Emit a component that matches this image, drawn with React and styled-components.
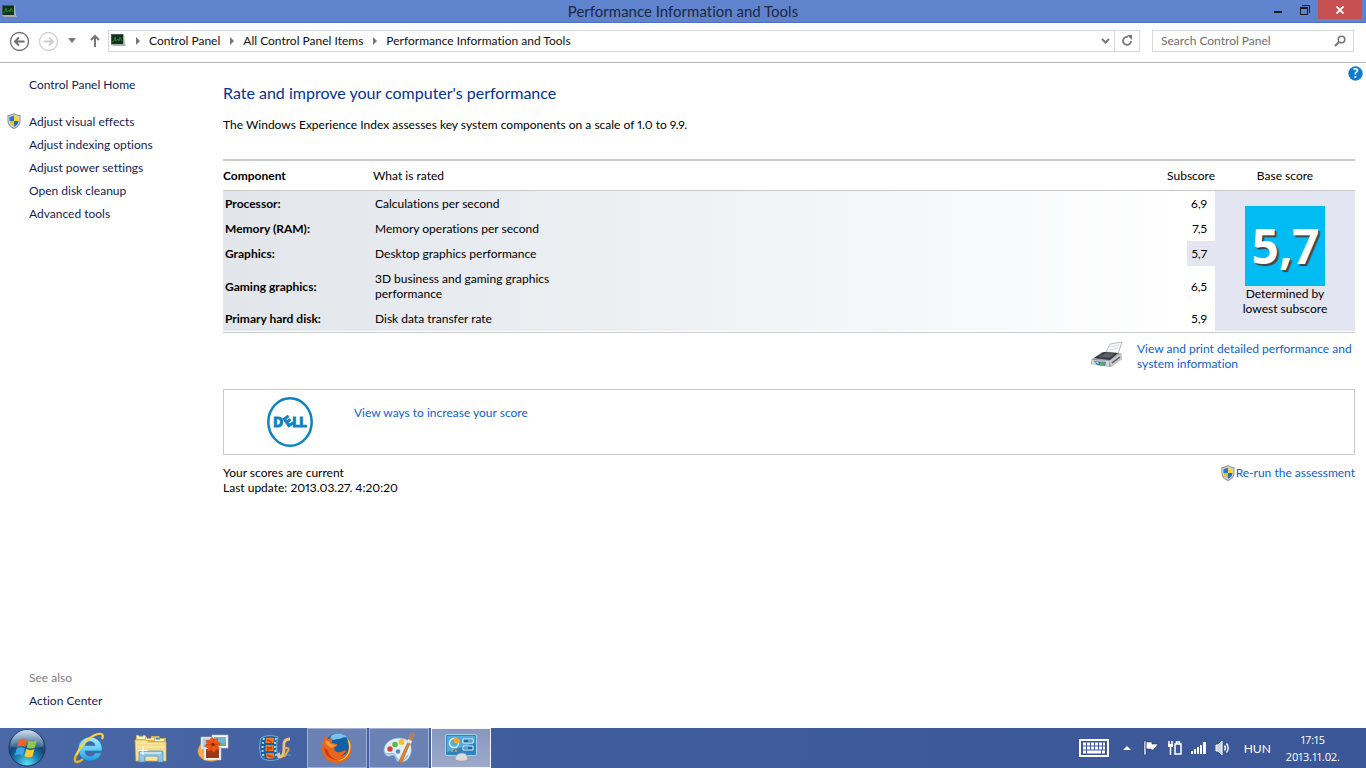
import React from 'react';
import styled, { createGlobalStyle, css } from 'styled-components';

const GlobalStyle = createGlobalStyle`
    * {
        box-sizing: border-box;
    }

    body {
        margin: 0;
        background: white;
        color: #000;
        font-family: Lato, "Open Sans", sans-serif;
        font-size: 12px;
        line-height: 15px;
        font-variant-ligatures: none;
        font-variant-numeric: proportional-nums;
    }

    button {
        padding: 0;
        border: 0;
        background: none;
        color: inherit;
        font: inherit;
        font-variant-ligatures: none;
    }

    svg {
        display: block;
        flex: none;
    }
`;

const Screen = styled.div`
    display: flex;
    flex-direction: column;
    min-height: 100vh;
`;

const TitleBar = styled.header`
    display: grid;
    grid-template-columns: 1fr auto 1fr;
    height: 23px;
    background: #6083cd;
    border-bottom: 1px solid #4d6fb8;
`;

const TitleIcon = styled.div`
    padding: 5px 2px;
`;

const WindowTitle = styled.div`
    color: #1c2740;
    font-size: 15px;
    line-height: 23px;
`;

const WindowButtons = styled.div`
    display: flex;
    justify-content: flex-end;
    padding-right: 4px;
`;

const WindowButton = styled.button`
    display: flex;
    align-items: center;
    justify-content: center;
    width: ${props => (props.$close ? '44px' : '27px')};
    height: 19px;
    background: ${props => (props.$close ? '#c75050' : 'transparent')};
`;

const NavBar = styled.nav`
    display: flex;
    align-items: center;
    height: 40px;
    padding: 0 12px 4px 9px;
    border-bottom: 1px solid #b4b4b4;
`;

const NavButtons = styled.div`
    display: flex;
    align-items: center;
    gap: 9px;
    width: 99px;
`;

const NavButton = styled.button`
    display: flex;
`;

const AddressBar = styled.div`
    display: flex;
    flex: 1;
    align-items: stretch;
    height: 22px;
    border: 1px solid #d9d9d9;
    color: #111;
`;

const Crumbs = styled.div`
    display: flex;
    flex: 1;
    align-items: center;
    padding-left: 2px;
`;

const Crumb = styled.button`
    white-space: nowrap;
`;

const CrumbArrow = styled.span`
    display: flex;
    justify-content: center;
    width: 23px;
`;

const AddressButton = styled.button`
    display: flex;
    align-items: center;
    justify-content: center;
    width: ${props => (props.$refresh ? '25px' : '18px')};
    border-left: ${props => (props.$refresh ? '1px solid #d9d9d9' : '0')};
`;

const SearchBox = styled.form`
    display: flex;
    align-items: center;
    width: 202px;
    height: 22px;
    margin-left: 12px;
    padding: 0 7px 0 8px;
    border: 1px solid #d9d9d9;
`;

const SearchInput = styled.input`
    flex: 1;
    min-width: 0;
    padding: 0;
    border: 0;
    outline: 0;
    font: inherit;

    &::placeholder {
        color: #6d6d6d;
        opacity: 1;
    }
`;

const Content = styled.div`
    display: flex;
    flex: 1;
`;

const Sidebar = styled.aside`
    display: flex;
    flex-direction: column;
    justify-content: space-between;
    width: 223px;
    padding: 10px 0 16px 7px;
`;

const SideList = styled.ul`
    margin: 0;
    padding: 0;
    list-style: none;
`;

const SideItem = styled.li`
    display: flex;
    align-items: center;
    height: ${props => (props.$shield ? '24px' : '23px')};
    padding-left: ${props => (props.$shield ? '0' : '22px')};
    margin-bottom: ${props => (props.$spaced ? '13px' : '0')};
    gap: 8px;
    color: ${props => (props.$muted ? '#7f7f7f' : '#151c55')};
`;

const SideLink = styled.a`
    color: #151c55;
    text-decoration: none;
`;

const Main = styled.main`
    position: relative;
    flex: 1;
    padding: 20px 11px 0 0;
`;

const HelpButton = styled.button`
    position: absolute;
    top: 3px;
    right: 3px;
`;

const Heading = styled.h1`
    margin: 0 0 14px;
    color: #003399;
    font-size: 16px;
    font-weight: 400;
    line-height: 20px;
`;

const Intro = styled.p`
    margin: 0 0 27px;
`;

const ScoreTable = styled.table`
    width: 100%;
    padding-bottom: 1px;
    border-collapse: separate;
    border-spacing: 0;
    border-top: 2px solid #cacaca;
    border-bottom: 1px solid #cacaca;
    table-layout: fixed;
`;

const HeadCell = styled.th`
    height: 30px;
    padding: 0;
    border-bottom: 1px solid #cacaca;
    font-weight: ${props => (props.$strong ? '700' : '400')};
    text-align: ${props => props.$align || 'left'};
`;

const ScoreRow = styled.tr`
    background: linear-gradient(to right, #e2e6eb 0%, #e9ecf0 25%, #ffffff 86%);
`;

const NameCell = styled.th`
    padding: 5px 2px;
    text-align: left;
`;

const RatedCell = styled.td`
    padding: 5px 2px;
`;

const RatedText = styled.div`
    max-width: ${props => (props.$wrap ? '200px' : 'none')};
`;

const SubscoreCell = styled.td`
    padding: 5px 8px 5px 0;
    text-align: right;
    ${props => props.$lowest && css`
        background: #e3e5f1;
    `}
`;

const BaseCell = styled.td`
    padding: 0;
    background: #e3e5f1;
    text-align: center;
`;

const BaseScore = styled.div`
    width: 80px;
    height: 80px;
    margin: 0 auto;
    background: #00bcf2;
    color: white;
    font-family: "Open Sans", sans-serif;
    font-size: 48px;
    font-weight: 700;
    line-height: 80px;
    text-shadow: 2px 2px 1px #444;
`;

const BaseNote = styled.div`
    width: 100px;
    margin: 0 auto;
`;

const Link = styled.a`
    color: #0b61cd;
    text-decoration: none;
`;

const PrintRow = styled.div`
    display: flex;
    justify-content: flex-end;
    gap: 14px;
    padding: 8px 0 18px;
`;

const PrintLink = styled(Link)`
    width: 218px;
`;

const VendorBox = styled.section`
    display: flex;
    height: 66px;
    padding: 7px 0 0 43px;
    border: 1px solid #cacaca;
`;

const VendorLink = styled(Link)`
    margin: 8px 0 0 41px;
`;

const StatusRow = styled.footer`
    display: flex;
    justify-content: space-between;
    align-items: flex-start;
    padding-top: 10px;
`;

const RunLink = styled(Link)`
    display: flex;
    align-items: flex-start;
    gap: 1px;
`;

const Taskbar = styled.div`
    display: flex;
    height: 40px;
    background: linear-gradient(to right, #4a67a6 0%, #3f5c9d 40%, #3b5797 100%);
    color: white;
`;

const StartButton = styled.button`
    display: flex;
    align-items: center;
    justify-content: center;
    width: 57px;
    padding-right: 3px;
`;

const TaskButtons = styled.div`
    display: flex;
    flex: 1;
    gap: 2px;
    padding-left: 2px;
`;

const TaskButton = styled.button`
    display: flex;
    align-items: center;
    justify-content: center;
    width: 60px;
    height: 40px;
    border: 1px solid transparent;
    ${props => props.$open && css`
        background: #6b81b4;
        border-color: #a3b1d2;
    `}
    ${props => props.$active && css`
        background: linear-gradient(#8797bd, #9daaca);
        border-color: #f4f6fa;
    `}
`;

const Tray = styled.div`
    display: flex;
    align-items: center;
    gap: 8px;
    padding-right: 26px;
`;

const TrayButton = styled.button`
    display: flex;
    align-items: center;
    justify-content: center;
    min-width: 16px;
    margin-right: ${props => (props.$spaced ? '2px' : '0')};
`;

const Language = styled.button`
    margin: 0 7px 0 5px;
`;

const Clock = styled.time`
    font-family: "Open Sans", sans-serif;
    font-size: 11px;
    line-height: 17px;
    text-align: center;
`;

const MonitorIcon = () => (
    <svg width="15" height="13" viewBox="0 0 15 13">
        <path d="M0 0h13l1 10 1 2H3l-3-1z" fill="#a9adad" />
        <path d="M0 0h12v10H0z" fill="#4c5450" />
        <path d="M1 1h11v9H1z" fill="#14301f" />
        <path d="M1 8l2-1 1-4 1 4 2-2 1 2 1-4 2 4" fill="none" stroke="#237f30" />
    </svg>
);

const CircleArrow = ({ forward }) => {
    const color = forward ? '#cfcfcf' : '#6e6e6e';
    return (
        <svg width="20" height="20" viewBox="0 0 20 20" fill="none" stroke={color}>
            <circle cx="10.500" cy="10.500" r="9" strokeWidth="1.300" />
            {forward
                ? <path d="M5.500 10.500h9M11 6.500l4 4-4 4" strokeWidth="2" />
                : <path d="M15.500 10.500h-9M10 6.500l-4 4 4 4" strokeWidth="2" />}
        </svg>
    );
};

const ShieldIcon = () => (
    <svg width="14" height="16" viewBox="0 0 14 16">
        <path d="M7 0C5 1.600 3 2 .5 2v6c0 4 3 6.500 6.500 8 3.500-1.500 6.500-4 6.500-8V2C11 2 9 1.600 7 0z" fill="#8b9197" />
        <path d="M7 1.200C5 2.500 3.500 2.900 1.500 3v5c0 3.500 2.500 5.500 5.500 6.900 3-1.400 5.500-3.400 5.500-6.900V3C10.500 2.900 9 2.500 7 1.200z" fill="#d9dde0" />
        <path d="M7 2.500C5.500 3.400 4 3.800 2.500 4v4H7z" fill="#2778d2" />
        <path d="M7 2.500C8.500 3.400 10 3.800 11.500 4v4H7z" fill="#fbd72c" />
        <path d="M2.500 8c0 3 2 4.700 4.500 5.800V8z" fill="#f2c01f" />
        <path d="M11.500 8c0 3-2 4.700-4.500 5.800V8z" fill="#1f6dc8" />
    </svg>
);

const HelpIcon = () => (
    <svg width="15" height="15" viewBox="0 0 15 15">
        <circle cx="7.500" cy="7.500" r="7.200" fill="#1279d2" />
        <text x="7.500" y="12" fill="white" fontSize="13" fontWeight="700" textAnchor="middle">?</text>
    </svg>
);

const PrinterIcon = () => (
    <svg width="33" height="27" viewBox="0 0 33 27">
        <path d="M16 11L20 3l12-2-4 12z" fill="#f5f6f7" stroke="#a8abae" strokeWidth=".8" />
        <path d="M20 6l9-2M19 9l9-2" stroke="#e0e2e4" />
        <path d="M1 19L12 11l19 1 1 6-11 8-20-3z" fill="#9a9ea3" />
        <path d="M4 17l10-6 14 1-8 7z" fill="#34373b" />
        <path d="M8 16l8-4 9 1-6 4z" fill="#5b6066" />
        <path d="M1 19l18 1v5L2 23z" fill="#d6d9dc" />
        <path d="M19 20l12-8 1 6-11 8z" fill="#c4c8cc" />
        <path d="M22 22l8-6" stroke="#55595e" strokeWidth="1.500" />
        <path d="M4 20l12 1-1 4-8-1z" fill="#357fc4" />
        <path d="M10 21l5 1-1 3-4-1z" fill="#5bb05a" />
        <path d="M5 21l3 0 1 2z" fill="#c7e6fa" />
    </svg>
);

const DellLogo = () => (
    <svg width="46" height="50" viewBox="0 0 46 50">
        <ellipse cx="23" cy="25" rx="21.700" ry="23.700" fill="white" stroke="#0f82c1" strokeWidth="2.500" />
        <g fill="#0f82c1" stroke="#0f82c1" strokeWidth="1" fontFamily="Open Sans" fontSize="14" fontWeight="700">
            <text x="6" y="30">D</text>
            <text x="17" y="30" transform="rotate(-35 20 25)">E</text>
            <text x="25" y="30">L</text>
            <text x="32" y="30">L</text>
        </g>
    </svg>
);

const StartIcon = () => (
    <svg width="38" height="38" viewBox="0 0 38 38">
        <defs>
            <radialGradient id="orb" cx="50%" cy="95%" r="90%">
                <stop offset="0" stopColor="#63e2f7" />
                <stop offset=".35" stopColor="#1b84b4" />
                <stop offset=".65" stopColor="#154673" />
                <stop offset="1" stopColor="#6e93b8" />
            </radialGradient>
            <linearGradient id="orbGloss" x2="0" y2="1">
                <stop offset="0" stopColor="#dbe7f2" stopOpacity=".9" />
                <stop offset="1" stopColor="#7ea3c4" stopOpacity=".3" />
            </linearGradient>
        </defs>
        <circle cx="19" cy="19" r="18" fill="url(#orb)" stroke="#1b335e" />
        <path d="M2.500 17a16.500 16 0 0 1 33 0c-8 4-11-1-17 0s-10 3-16 0z" fill="url(#orbGloss)" />
        <path d="M11 10.500c3-1.400 5.500-1 8 .5l-1.800 7c-2.500-1.400-5-1.600-8-.3z" fill="#f0642c" />
        <path d="M20.500 11.500c2.500 1.300 5 1.300 8.300 0l-2 7.200c-3 1.200-5.600 1-8-.3z" fill="#93c842" />
        <path d="M8.800 19.200c3-1.300 5.500-1 8 .4l-2 7.200c-2.500-1.500-5-1.700-8-.4z" fill="#3fa5e6" />
        <path d="M18.300 20c2.500 1.400 5 1.500 8.100.3l-2 7.200c-3 1.300-5.600 1-8-.3z" fill="#fdc92f" />
    </svg>
);

const ExplorerIcon = () => (
    <svg width="32" height="32" viewBox="0 0 32 32">
        <defs>
            <linearGradient id="ieBlue" x2="0" y2="1">
                <stop offset="0" stopColor="#a9ebfe" />
                <stop offset=".55" stopColor="#5cc8f4" />
                <stop offset="1" stopColor="#2496dc" />
            </linearGradient>
        </defs>
        <path d="M28.500 21a12 12 0 1 1 .5-6v4H12c.5 6 8 7 10 2zM12 13.500h10c-.7-5.500-9-5.500-10 0z" fill="url(#ieBlue)" stroke="#1c78bd" strokeWidth=".6" />
        <path d="M4.500 21C1 26 1 30 4 30c2 0 4-1 6-3" fill="none" stroke="#e9b61c" strokeWidth="2.400" />
        <path d="M3.500 23C8 12 17 4 25 2c4-1 6 1 4 5" fill="none" stroke="#fbd43a" strokeWidth="2.200" />
    </svg>
);

const FolderIcon = () => (
    <svg width="34" height="30" viewBox="0 0 34 30">
        <path d="M2 4V2h9l2 2h4V3h8l1 2h6v23H2z" fill="#d9b455" />
        <path d="M3 3h8v3H3z" fill="#fff3bd" />
        <path d="M5 2h4v1.500H5z" fill="#28a43a" />
        <path d="M12 5h8v2h-8z" fill="#fff3bd" />
        <path d="M13 4h4v1.500h-4z" fill="#d73b2b" />
        <path d="M21 6h9v2h-9z" fill="#fff3bd" />
        <path d="M22 5h4v1.500h-4z" fill="#2b8ddb" />
        <path d="M1 7h11l2 2h18v19H2z" fill="#f8e49b" stroke="#d4b055" strokeWidth=".8" />
        <path d="M3 12h28M3 16h28" stroke="#f2d67f" />
        <path d="M5 29V19q0-1 1-1h22q1 0 1 1v10h-5v-5q0-1-1-1H12q-1 0-1 1v5z" fill="#8fc5e6" stroke="#4f93bf" strokeWidth=".8" />
        <path d="M6 20h21" stroke="#d3edf9" strokeWidth="1.500" />
        <path d="M9 13v9M4.500 17.500h9" stroke="white" />
    </svg>
);

const PhotosIcon = () => (
    <svg width="32" height="30" viewBox="0 0 32 30">
        <path d="M4 11c-6 7-3 15 7 17 4 1 7 0 9-1-8 0-14-6-13-14z" fill="#f6ad52" stroke="#d5822c" strokeWidth=".6" />
        <path d="M4 4h12v12H4z" fill="#f3f6fa" stroke="#b7c0cc" strokeWidth=".6" />
        <path d="M5.500 5.500h9v9h-9z" fill="#a8cdec" />
        <path d="M15 2h16v13H15z" fill="#fbfcfd" stroke="#b7c0cc" strokeWidth=".6" />
        <path d="M17 4h12v9H17z" fill="#6fb7d8" />
        <path d="M17 10h12v3H17z" fill="#6bb265" />
        <path d="M7 15h17v12H7z" fill="#f3f6fa" stroke="#b7c0cc" strokeWidth=".6" />
        <path d="M9 16h13v9H9z" fill="#9a3a19" />
        <path d="M15 4l2.500 2 3.500-1 0 3.500 3 2-2.500 2.500 1 3.500-3.500 0-2 3-3-2.500-3.500 1.500 0-3.500-3.500-2 2.500-2.500-1-3.500 3.500 0z" fill="#ee5716" />
        <path d="M11 8l10 7M17 6l-3 11M9 12l14-1" stroke="#c43c0c" strokeWidth=".6" />
        <circle cx="16" cy="11.500" r="1.600" fill="#7a220b" />
    </svg>
);

const MovieIcon = () => (
    <svg width="34" height="28" viewBox="0 0 34 28">
        <path d="M3 4c5-3 11-3 17-1-2 7-2 15 1 22-6 2-13 2-17-1C1 18 1 10 3 4z" fill="#1f5c9a" stroke="#75b3df" />
        <path d="M6 4c-2 7-2 14 0 20M18 4c-2 7-1 14 1 20" stroke="#a7dcf5" strokeWidth="2" strokeDasharray="2 2" fill="none" />
        <path d="M8 4c3-.8 5-.8 8 0l-.5 5H7.500zM7.500 11h8v6h-8zM8 19h8l.5 5c-3 1-5 1-8 0z" fill="#ee7b20" />
        <path d="M9 6l5 2M9 13l5 2m0-2l-5 3M9 21l6 2" stroke="#c7400b" strokeWidth="1.500" />
        <path d="M21 21h12" stroke="#3d86c2" strokeWidth="2" />
        <path d="M32 5c-5 0-7 3-6 8 0 5-1 10-4 10-2 0-2-3 0-3" fill="none" stroke="#f0c27a" strokeWidth="2.800" />
        <path d="M26 15c3-2 6-1 4 2l-4 6" fill="none" stroke="#e8a953" strokeWidth="2" />
    </svg>
);

const FirefoxIcon = () => (
    <svg width="32" height="32" viewBox="0 0 32 32">
        <circle cx="17" cy="14.500" r="13" fill="#1460a8" />
        <path d="M10 4c5-4 13-3 17 2-5-2-6 1-10 1s-5 2-8 1z" fill="#75c3ee" />
        <path d="M2 8c0-2 1-3 2-4 1 2 2 3 3 3 2-1 3-1 5 0-1 1-2 2-1 4l5 1c1 1 0 2-3 4 0 3 3 5 6 4 3 0 4-2 5-2 2 1-1 5-5 6 6 0 9-5 9-10 0-4-1-7-3-9 5 3 6 9 5 14-1 8-7 12-14 12C7 31 1 25 1 17c0-4 1-6 1-9z" fill="#e7651c" />
        <path d="M26 6c4 4 4 8 3 13-2 7-8 10-13 10 5-1 12-5 12-13 0-4-1-7-2-10z" fill="#fcd13b" />
        <path d="M3 15c1 8 6 13 14 13-5-1-9-4-10-9z" fill="#c63817" />
        <path d="M4 9c2-1 5 0 6 3l5 1c-1 1-3 2-4 3-3-1-6-3-7-7z" fill="#f49a31" />
    </svg>
);

const PaintIcon = () => (
    <svg width="32" height="32" viewBox="0 0 32 32">
        <path d="M16 6C7 6 1 12 1 18c0 5 3 7 6 6 4-2 5 0 6 3 1 4 7 4 11 1 4-4 5-9 4-14-1-5-5-8-12-8z" fill="#e0eff9" stroke="#7bacc9" strokeWidth=".8" />
        <path d="M2 21c3 3 6-1 9 1 2 1 2 6 6 7 3 0 6-2 8-6" fill="none" stroke="#8cc5e6" strokeWidth="1.500" />
        <circle cx="7" cy="17" r="2.700" fill="#dc4138" />
        <circle cx="12" cy="12.500" r="2.700" fill="#5db745" />
        <circle cx="18.500" cy="10" r="3" fill="#f1c32e" />
        <circle cx="15" cy="19.500" r="2.300" fill="#5c8db7" />
        <path d="M26 8l2 1-9 21-3 1 1-4z" fill="#e2842c" stroke="#a65215" strokeWidth=".5" />
        <path d="M25 7l2-6 4-1 1 3-3 6z" fill="#ab8468" />
        <path d="M25 7l4 2-1 3-4-2z" fill="#e6e7e8" />
    </svg>
);

const PanelIcon = () => (
    <svg width="32" height="28" viewBox="0 0 32 28">
        <rect x=".5" y=".5" width="31" height="21" rx="1.500" fill="#2d82bf" stroke="#9fd5f1" />
        <path d="M2 2h28v7L2 18z" fill="#54abdc" />
        <circle cx="9" cy="9" r="4.500" fill="none" stroke="#d9effb" strokeWidth="1.500" />
        <path d="M9 9V3a6 6 0 0 1 6 6z" fill="#f8a92d" />
        <path d="M18 5h10v4H18zM18 12h10v4H18z" fill="#1c6aa7" stroke="#dff2fc" />
        <path d="M23 7h4M19 14h4" stroke="#9fd5f1" />
        <circle cx="7" cy="17" r="1" fill="#f8a92d" />
        <circle cx="11" cy="17" r="1" fill="#f8a92d" />
        <path d="M10 25c0-3 3-6 7-6s6 3 6 6c-1 3-12 3-13 0z" fill="#d9dbdd" stroke="#8c9095" strokeWidth=".7" />
    </svg>
);

const KeyboardIcon = () => (
    <svg width="30" height="18" viewBox="0 0 30 18">
        <rect x="1" y="1" width="28" height="16" fill="none" stroke="white" strokeWidth="2" />
        <path d="M4 5h22M4 9h22" stroke="white" strokeWidth="3" strokeDasharray="3 1" />
        <path d="M4 13h3m1 0h14m1 0h3" stroke="white" strokeWidth="3" />
    </svg>
);

const FlagIcon = () => (
    <svg width="16" height="16" viewBox="0 0 16 16">
        <path d="M1 1h2v14H1zM3 2h6v2h6l-2 3-3 3H8V9H3z" fill="white" stroke="#1d356b" strokeWidth=".6" />
    </svg>
);

const PowerIcon = () => (
    <svg width="16" height="16" viewBox="0 0 16 16">
        <path d="M2 1v3M5 1v3M3.500 7v8" stroke="white" strokeWidth="1.500" />
        <path d="M1 4h5v3H1z" fill="white" />
        <path d="M8 4h6v10H8zM9.500 2h3v2h-3z" fill="none" stroke="white" strokeWidth="1.500" />
    </svg>
);

const SignalIcon = () => (
    <svg width="16" height="16" viewBox="0 0 16 16">
        <path d="M0 11h2v3H0zM3 9h2v5H3zM6 7h2v7H6zM9 5h2v9H9zM12 2h3v12h-3z" fill="white" />
    </svg>
);

const SpeakerIcon = () => (
    <svg width="16" height="16" viewBox="0 0 16 16" fill="none" stroke="white">
        <path d="M1 5h2l4-4v14l-4-4H1z" fill="#c9d3e8" />
        <path d="M9.500 5.500q2 2.500 0 5M11.500 3.500q3.500 4.500 0 9" strokeWidth="1.300" />
    </svg>
);

const scores = [
    { name: 'Processor:', rated: 'Calculations per second', score: '6,9' },
    { name: 'Memory (RAM):', rated: 'Memory operations per second', score: '7,5' },
    { name: 'Graphics:', rated: 'Desktop graphics performance', score: '5,7', lowest: true },
    { name: 'Gaming graphics:', rated: '3D business and gaming graphics performance', score: '6,5', wrap: true },
    { name: 'Primary hard disk:', rated: 'Disk data transfer rate', score: '5,9' },
];

const tasks = [
    { label: 'Internet Explorer', icon: <ExplorerIcon /> },
    { label: 'File Explorer', icon: <FolderIcon /> },
    { label: 'Photo Gallery', icon: <PhotosIcon /> },
    { label: 'Movie Maker', icon: <MovieIcon /> },
    { label: 'Firefox', icon: <FirefoxIcon />, open: true },
    { label: 'Paint', icon: <PaintIcon />, open: true },
    { label: 'Control Panel', icon: <PanelIcon />, open: true, active: true },
];

const crumbs = ['Control Panel', 'All Control Panel Items', 'Performance Information and Tools'];

const sideLinks = ['Adjust indexing options', 'Adjust power settings', 'Open disk cleanup', 'Advanced tools'];

const Navigation = () => (
    <NavBar>
        <NavButtons>
            <NavButton aria-label="Back"><CircleArrow /></NavButton>
            <NavButton aria-label="Forward"><CircleArrow forward /></NavButton>
            <NavButton aria-label="Recent pages">
                <svg width="11" height="5" viewBox="0 0 11 5"><path d="M1 0h8L5 5z" fill="#777" /></svg>
            </NavButton>
            <NavButton aria-label="Up">
                <svg width="15" height="14" viewBox="0 0 15 14" fill="none" stroke="#777" strokeWidth="2">
                    <path d="M8 13V2M4 6l4-4 4 4" />
                </svg>
            </NavButton>
        </NavButtons>
        <AddressBar>
            <Crumbs>
                <MonitorIcon />
                {crumbs.map(crumb => (
                    <React.Fragment key={crumb}>
                        <CrumbArrow>
                            <svg width="4" height="8" viewBox="0 0 4 8"><path d="M0 0l4 4-4 4z" fill="#777" /></svg>
                        </CrumbArrow>
                        <Crumb>{crumb}</Crumb>
                    </React.Fragment>
                ))}
            </Crumbs>
            <AddressButton aria-label="Previous locations">
                <svg width="9" height="6" viewBox="0 0 9 6"><path d="M1 1l3.500 3.500L8 1" fill="none" stroke="#777" strokeWidth="2" /></svg>
            </AddressButton>
            <AddressButton $refresh aria-label="Refresh">
                <svg width="12" height="12" viewBox="0 0 12 12">
                    <path d="M7 2a4 4 0 1 0 3 4" fill="none" stroke="#777" strokeWidth="1.800" />
                    <path d="M6 0h5v5z" fill="#777" />
                </svg>
            </AddressButton>
        </AddressBar>
        <SearchBox>
            <SearchInput aria-label="Search Control Panel" placeholder="Search Control Panel" />
            <svg width="12" height="12" viewBox="0 0 12 12" fill="none" stroke="#777">
                <circle cx="7.500" cy="4.500" r="3.300" strokeWidth="1.600" />
                <path d="M5 7l-4 4" strokeWidth="2.200" />
            </svg>
        </SearchBox>
    </NavBar>
);

const Scores = () => (
    <ScoreTable>
        <colgroup>
            <col style={{ width: 150 }} />
            <col />
            <col style={{ width: 60 }} />
            <col style={{ width: 28 }} />
            <col style={{ width: 140 }} />
        </colgroup>
        <thead>
            <tr>
                <HeadCell $strong>Component</HeadCell>
                <HeadCell>What is rated</HeadCell>
                <HeadCell colSpan={2} $align="right">Subscore</HeadCell>
                <HeadCell $align="center">Base score</HeadCell>
            </tr>
        </thead>
        <tbody>
            {scores.map((row, index) => (
                <ScoreRow key={row.name}>
                    <NameCell scope="row">{row.name}</NameCell>
                    <RatedCell colSpan={2}>
                        <RatedText $wrap={row.wrap}>{row.rated}</RatedText>
                    </RatedCell>
                    <SubscoreCell $lowest={row.lowest}>{row.score}</SubscoreCell>
                    {index === 0 && (
                        <BaseCell rowSpan={scores.length}>
                            <BaseScore>5,7</BaseScore>
                            <BaseNote>Determined by lowest subscore</BaseNote>
                        </BaseCell>
                    )}
                </ScoreRow>
            ))}
        </tbody>
    </ScoreTable>
);

const App = () => (
    <Screen>
        <GlobalStyle />
        <TitleBar>
            <TitleIcon><MonitorIcon /></TitleIcon>
            <WindowTitle>Performance Information and Tools</WindowTitle>
            <WindowButtons>
                <WindowButton aria-label="Minimize">
                    <svg width="8" height="8" viewBox="0 0 8 8"><path d="M0 5h8v2H0z" fill="#1b1b1b" /></svg>
                </WindowButton>
                <WindowButton aria-label="Restore">
                    <svg width="10" height="10" viewBox="0 0 10 10">
                        <path d="M0 2h8v8H0zM1 4v5h6V4z" fill="#1b1b1b" fillRule="evenodd" />
                        <path d="M2 0h8v8H9V1H2z" fill="#1b1b1b" />
                    </svg>
                </WindowButton>
                <WindowButton $close aria-label="Close">
                    <svg width="8" height="8" viewBox="0 0 8 8"><path d="M.5.500l7 7m0-7l-7 7" stroke="white" strokeWidth="1.800" /></svg>
                </WindowButton>
            </WindowButtons>
        </TitleBar>
        <Navigation />
        <Content>
            <Sidebar>
                <SideList>
                    <SideItem $spaced><SideLink href="#home">Control Panel Home</SideLink></SideItem>
                    <SideItem $shield>
                        <ShieldIcon />
                        <SideLink href="#visual">Adjust visual effects</SideLink>
                    </SideItem>
                    {sideLinks.map(text => (
                        <SideItem key={text}><SideLink href="#task">{text}</SideLink></SideItem>
                    ))}
                </SideList>
                <SideList>
                    <SideItem $muted>See also</SideItem>
                    <SideItem><SideLink href="#action">Action Center</SideLink></SideItem>
                </SideList>
            </Sidebar>
            <Main>
                <HelpButton aria-label="Help"><HelpIcon /></HelpButton>
                <Heading>Rate and improve your computer's performance</Heading>
                <Intro>The Windows Experience Index assesses key system components on a scale of 1.0 to 9.9.</Intro>
                <Scores />
                <PrintRow>
                    <PrinterIcon />
                    <PrintLink href="#print">View and print detailed performance and system information</PrintLink>
                </PrintRow>
                <VendorBox>
                    <DellLogo />
                    <VendorLink href="#ways">View ways to increase your score</VendorLink>
                </VendorBox>
                <StatusRow>
                    <div>
                        <div>Your scores are current</div>
                        <div>Last update: 2013.03.27. 4:20:20</div>
                    </div>
                    <RunLink href="#run"><ShieldIcon />Re-run the assessment</RunLink>
                </StatusRow>
            </Main>
        </Content>
        <Taskbar>
            <StartButton aria-label="Start"><StartIcon /></StartButton>
            <TaskButtons>
                {tasks.map(task => (
                    <TaskButton key={task.label} aria-label={task.label} $open={task.open} $active={task.active}>
                        {task.icon}
                    </TaskButton>
                ))}
            </TaskButtons>
            <Tray>
                <TrayButton $spaced aria-label="Keyboard"><KeyboardIcon /></TrayButton>
                <TrayButton aria-label="Show hidden icons">
                    <svg width="8" height="4" viewBox="0 0 8 4"><path d="M4 0l4 4H0z" fill="white" /></svg>
                </TrayButton>
                <TrayButton aria-label="Action Center"><FlagIcon /></TrayButton>
                <TrayButton aria-label="Power"><PowerIcon /></TrayButton>
                <TrayButton aria-label="Network"><SignalIcon /></TrayButton>
                <TrayButton aria-label="Volume"><SpeakerIcon /></TrayButton>
                <Language>HUN</Language>
                <Clock>
                    <div>17:15</div>
                    <div>2013.11.02.</div>
                </Clock>
            </Tray>
        </Taskbar>
    </Screen>
);

export default App;
